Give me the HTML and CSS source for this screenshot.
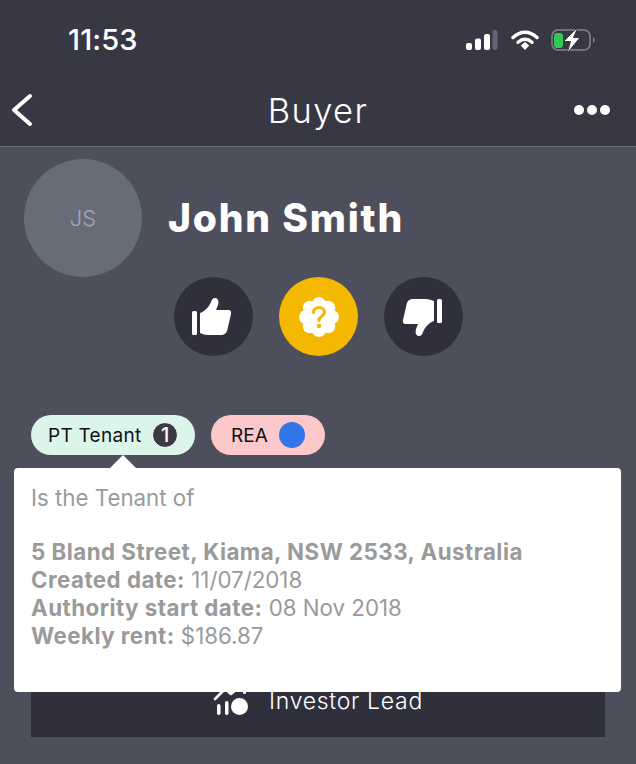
FILE: index.html
```html
<!DOCTYPE html>
<html lang="en">
<head>
    <meta charset="UTF-8">
    <meta name="viewport" content="width=device-width, initial-scale=1.0">
    <title>Buyer</title>
    <link rel="stylesheet" href="styles.css">
</head>
<body>
    <header class="top">
        <div class="status">
            <span class="clock">11:53</span>
            <div class="status-icons">
                <svg class="signal" width="32" height="20" viewBox="0 0 32 20">
                    <rect x="0" y="13" width="6" height="7" rx="2" fill="#fff"/>
                    <rect x="9" y="8.5" width="6" height="11.5" rx="2" fill="#fff"/>
                    <rect x="18" y="4" width="6" height="16" rx="2" fill="#fff"/>
                    <rect x="26.5" y="0" width="5" height="20" rx="2" fill="#63646f"/>
                </svg>
                <svg class="wifi" width="28" height="20" viewBox="0 0 28 20">
                    <path d="M2 7.5C9.500 .5 18.500 .5 26 7.500" fill="none" stroke="#fff" stroke-width="3.400" stroke-linecap="round"/>
                    <path d="M7 12.300C11.500 8.500 16.500 8.500 21 12.300" fill="none" stroke="#fff" stroke-width="3.400" stroke-linecap="round"/>
                    <path d="M9.800 15.500 14 11.900 18.200 15.500 14 20Z" fill="#fff"/>
                </svg>
                <svg class="battery" width="43" height="24" viewBox="0 0 43 24">
                    <rect x="0" y="2" width="38" height="20" rx="6" fill="none" stroke="#83848d" stroke-width="1.500"/>
                    <rect x="2" y="5" width="9" height="15" rx="3" fill="#35c759"/>
                    <path d="M41 9c2 .5 2 5.500 0 6z" fill="#83848d"/>
                    <path d="M26 -1 11.500 13.500h7L15 25.500 28 9.500h-6.500z" fill="#fff" stroke="#383844" stroke-width="1"/>
                </svg>
            </div>
        </div>
        <nav class="nav">
            <svg class="back" width="24" height="36" viewBox="0 0 24 36">
                <path d="M20 4 4 18l16 14" fill="none" stroke="#fff" stroke-width="4" stroke-linecap="round" stroke-linejoin="round"/>
            </svg>
            <h1 class="title">Buyer</h1>
            <div class="more"><i></i><i></i><i></i></div>
        </nav>
    </header>

    <main class="content">
        <section class="profile">
            <div class="avatar">JS</div>
            <h2 class="name">John Smith</h2>
        </section>
        <div class="votes">
            <button class="vote">
                <svg class="thumb-up" width="40" height="38" viewBox="0 0 40 38">
                    <rect x="0" y="13" width="5" height="24" rx="1.500" fill="#fff"/>
                    <path d="M8 15c4-1 9-6 11-11 1-3 2-4 4-4 3 0 4 3 3 7l-2 5h12c3 0 3.500 2 3 4l-3 13c-1 6-3 8-7 8H16c-3 0-5-1-8-2z" fill="#fff"/>
                </svg>
            </button>
            <button class="vote active">
                <svg width="40" height="40" viewBox="0 0 40 40">
                    <g fill="#fff">
                        <circle cx="20" cy="7" r="7"/>
                        <circle cx="20" cy="33" r="7"/>
                        <circle cx="7" cy="20" r="7"/>
                        <circle cx="33" cy="20" r="7"/>
                        <circle cx="10.800" cy="10.800" r="7"/>
                        <circle cx="29.200" cy="10.800" r="7"/>
                        <circle cx="10.800" cy="29.200" r="7"/>
                        <circle cx="29.200" cy="29.200" r="7"/>
                        <circle cx="20" cy="20" r="14"/>
                    </g>
                    <path d="M14.500 15.500c0-3 2.500-5 5.500-5s5.500 2 5.500 4.800c0 4-5.500 4-5.500 8" fill="none" stroke="#f5b800" stroke-width="3.200" stroke-linecap="round"/>
                    <circle cx="20" cy="29" r="2.300" fill="#f5b800"/>
                </svg>
            </button>
            <button class="vote">
                <svg class="thumb-down" width="40" height="38" viewBox="0 0 40 38">
                    <rect x="35" y="1" width="5" height="24" rx="1.500" fill="#fff"/>
                    <path d="M32 23c-4 1-9 6-11 11-1 3-2 4-4 4-3 0-4-3-3-7l2-5H4c-3 0-3.500-2-3-4L4 9c1-6 3-8 7-8h13c3 0 5 1 8 2z" fill="#fff"/>
                </svg>
            </button>
        </div>

        <div class="chips">
            <div class="chip chip-tenant">
                <span>PT Tenant</span>
                <b class="count">1</b>
            </div>
            <div class="chip chip-rea">
                <span>REA</span>
                <i class="dot"></i>
            </div>
            <div class="popup">
                <p class="popup-lead">Is the Tenant of</p>
                <p class="popup-info">
                    <b>5 Bland Street, Kiama, NSW 2533, Australia</b><br>
                    <b>Created date:</b> 11/07/2018<br>
                    <b>Authority start date:</b> 08 Nov 2018<br>
                    <b>Weekly rent:</b> $186.87
                </p>
            </div>
        </div>

        <div class="lead-bar">
            <svg width="36" height="30" viewBox="0 0 36 30">
                <path d="M2 13 12 3l6 5 8-7" fill="none" stroke="#fff" stroke-width="2.600" stroke-linecap="round" stroke-linejoin="round"/>
                <rect x="4" y="18" width="3.500" height="11" rx="1.700" fill="#fff"/>
                <rect x="12" y="15" width="3.500" height="14" rx="1.700" fill="#fff"/>
                <circle cx="26.500" cy="20.500" r="8.500" fill="#fff"/>
                <rect x="30" y="1" width="3" height="7" rx="1.500" fill="#fff"/>
            </svg>
            <span>Investor Lead</span>
        </div>
    </main>
</body>
</html>
```

FILE: styles.css
```css
* { box-sizing: border-box; }
html, body { margin: 0; padding: 0; }
body { width: 636px; height: 764px; overflow: hidden; background: #4d4f5c; font-family: Inter, "Liberation Sans", sans-serif; }

.top { height: 147px; background: #383844; border-bottom: 1px solid #6f707b; }
.status { height: 79px; padding: 20px 41px 0 68px; display: flex; justify-content: space-between; align-items: flex-start; }
.clock { color: #fff; font-size: 29px; font-weight: 500; line-height: 40px; letter-spacing: 0.1px; }
.status-icons { display: flex; align-items: center; gap: 13px; height: 40px; }
.battery { overflow: visible; }
.nav { height: 67px; padding: 0 26px 5px; display: grid; grid-template-columns: 1fr auto 1fr; align-items: center; }
.back { margin-left: -16px; }
.title { margin: 0; color: #fff; font-size: 34.500px; font-weight: 300; letter-spacing: 1.400px; }
.more { display: flex; gap: 3px; justify-self: end; }
.more i { width: 10px; height: 10px; border-radius: 50%; background: #fff; }

.content { padding: 12px 31px 0 24px; }
.profile { display: flex; align-items: center; gap: 26px; }
.avatar { width: 118px; height: 118px; border-radius: 50%; background: #666d78; color: #a2a7af; font-size: 22px; font-weight: 300; display: flex; align-items: center; justify-content: center; }
.name { margin: 0 0 2px; color: #fff; font-size: 39px; font-weight: 800; letter-spacing: 1.800px; }

.votes { padding-left: 150px; display: flex; gap: 26px; }
.vote { width: 79px; height: 79px; padding: 0; border: none; border-radius: 50%; background: #30303c; display: flex; align-items: center; justify-content: center; }
.vote.active { background: #f5b800; }
.thumb-up, .thumb-down { margin-left: -3px; }

.chips { position: relative; margin-top: 59px; padding-left: 7px; display: flex; gap: 16px; }
.chip { height: 40px; border-radius: 20px; display: flex; align-items: center; color: #111; font-size: 19px; }
.chip-tenant { width: 164px; padding-left: 17px; gap: 11px; background: #dcf5ea; letter-spacing: 0.27px; }
.chip-rea { width: 114px; padding-left: 20px; gap: 11px; background: #fcc8c9; }
.count { width: 26px; height: 26px; border-radius: 50%; border: 1px solid #fff; background: #3a3a42; color: #fff; font-size: 20px; font-weight: 500; display: flex; align-items: center; justify-content: center; }
.dot { width: 26px; height: 26px; border-radius: 50%; background: #3276e8; }

.popup { position: absolute; left: -10px; top: 53px; width: 607px; height: 224px; padding: 16px 17px 0; background: #fff; border-radius: 4px; color: #9a9a9a; font-size: 22.300px; line-height: 28px; z-index: 2; }
.popup::before { content: ""; position: absolute; left: 96px; top: -13px; border: 13px solid transparent; border-top: 0; border-bottom-color: #fff; }
.popup p { margin: 0; }
.popup b { letter-spacing: 0.48px; }
.popup-lead { margin-bottom: 26px !important; }

.lead-bar { margin: 231px 0 0 7px; width: 574px; height: 51px; background: #30303c; color: #fff; font-size: 23px; font-weight: 300; letter-spacing: 0.7px; display: flex; align-items: flex-start; justify-content: center; gap: 20px; }
.lead-bar span { line-height: 30px; }
```
